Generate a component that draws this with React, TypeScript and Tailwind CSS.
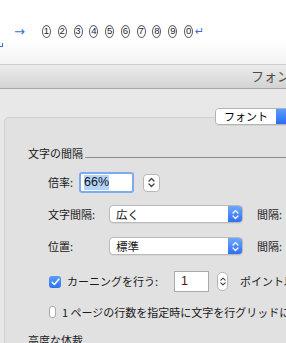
import React from "react";

const JP = { fontFamily: '"Noto Sans CJK JP", "Noto Sans", sans-serif' };

function Chevrons({ color = "#333", w = 7 }: { color?: string; w?: number }) {
  return (
    <svg width={w} height="11" viewBox="0 0 7 11" fill="none">
      <path d="M1 4 L3.5 1.5 L6 4" stroke={color} strokeWidth="1.3" strokeLinecap="round" strokeLinejoin="round" />
      <path d="M1 7 L3.5 9.5 L6 7" stroke={color} strokeWidth="1.3" strokeLinecap="round" strokeLinejoin="round" />
    </svg>
  );
}

function Popup({ text }: { text: string }) {
  return (
    <div className="flex h-[18px] w-[134px] rounded-[4px] border border-[#b9b9b9] bg-white overflow-hidden shadow-[0_1px_0_rgba(0,0,0,0.05)]">
      <div className="flex-1 pl-[6px] text-[11.5px] leading-[16px] text-[#1a1a1a]">{text}</div>
      <div className="flex w-[14px] items-center justify-center bg-gradient-to-b from-[#6ea8fb] to-[#2f6ff2]">
        <Chevrons color="#ffffff" />
      </div>
    </div>
  );
}

const nums = ["1", "2", "3", "4", "5", "6", "7", "8", "9", "0"];

export default function App() {
  return (
    <div className="relative h-[343px] w-[286px] overflow-hidden bg-white" style={JP}>
      {/* document area */}
      <div className="relative h-[64px] bg-gradient-to-b from-white from-60% to-[#f3f3f3]">
        <div className="flex items-center pt-[24px] h-[38px]">
          <span className="ml-[14px] text-[#3a6fd8] text-[13px] leading-none" style={{ fontFamily: '"DejaVu Sans", sans-serif' }}>→</span>
          <div className="ml-[17px] flex">
            {nums.map((n) => (
              <div key={n} className="flex w-[15.8px] justify-start">
                <span
                  className="flex h-[13px] w-[9px] items-center justify-center rounded-[50%] border border-[#5a5a6a] text-[9.5px] leading-none text-[#1a1a2a]"
                  style={{ fontFamily: '"Liberation Sans", sans-serif' }}
                >
                  {n}
                </span>
              </div>
            ))}
          </div>
          <span className="-ml-[5px] text-[11px] leading-none text-[#3a6fd8]" style={{ fontFamily: '"DejaVu Sans", sans-serif' }}>↵</span>
        </div>
        <div className="absolute left-0 top-[43px] h-[4px] w-[3px] border-b border-r border-[#3a6fd8]" />
      </div>

      {/* window title bar */}
      <div className="h-[25px] border-t border-b border-t-[#cdcdcd] border-b-[#a9a9a9] bg-gradient-to-b from-[#ececec] to-[#d3d3d3]">
        <div className="whitespace-nowrap pl-[251px] text-[13px] leading-[22px] text-[#4d4d4d]">フォント</div>
      </div>

      {/* body */}
      <div className="relative h-[254px] bg-[#e8e8e8] pt-[28px] pl-[4px]">
        {/* segmented control */}
        <div className="absolute left-[215px] top-[19px] z-10 flex h-[17px] w-[100px] overflow-hidden rounded-[4px] border border-[#b4b4b4] shadow-[0_1px_0_rgba(0,0,0,0.06)]">
          <div className="w-[60px] bg-white text-center text-[11px] leading-[15px] text-black">フォント</div>
          <div className="flex-1 bg-gradient-to-b from-[#5e9cfa] to-[#2a6cf1]" />
        </div>

        {/* group box */}
        <div className="h-[260px] w-[320px] rounded-[5px] border border-[#d0d0d0] bg-[#e1e1e1] pl-[23px]">
          <div className="mt-[28px] flex items-center h-[14px]">
            <span className="text-[11px] leading-[14px] text-[#1a1a1a]">文字の間隔</span>
            <div className="ml-[2px] mt-[9px] h-px flex-1 bg-[#8c8c8c]" />
          </div>

          {/* 倍率 */}
          <div className="mt-[12px] flex h-[21px] items-center pl-[20px]">
            <span className="w-[31px] text-[11px] text-[#1a1a1a]">倍率:</span>
            <div className="flex h-[21px] w-[55px] items-center rounded-[3px] border-[2px] border-[#7eaaf0] bg-white pl-[3px]">
              <span className="bg-[#b3d3fd] text-[12.5px] leading-[15px] text-[#111]" style={{ fontFamily: '"Liberation Sans", sans-serif' }}>66%</span>
            </div>
            <div className="ml-[9px] flex h-[18px] w-[17px] items-center justify-center rounded-[4px] border border-[#b7b7b7] bg-white">
              <Chevrons color="#444" />
            </div>
          </div>

          {/* 文字間隔 */}
          <div className="mt-[12px] flex h-[18px] items-center pl-[20px]">
            <span className="w-[61px] text-[11px] text-[#1a1a1a]">文字間隔:</span>
            <Popup text="広く" />
            <span className="ml-[14px] text-[11px] text-[#1a1a1a]">間隔:</span>
          </div>

          {/* 位置 */}
          <div className="mt-[14px] flex h-[18px] items-center pl-[20px]">
            <span className="w-[61px] text-[11px] text-[#1a1a1a]">位置:</span>
            <Popup text="標準" />
            <span className="ml-[14px] text-[11px] text-[#1a1a1a]">間隔:</span>
          </div>

          {/* カーニング */}
          <div className="mt-[16px] flex h-[21px] items-center pl-[21px]">
            <div className="flex h-[12px] w-[12px] items-center justify-center rounded-[3px] bg-gradient-to-b from-[#5a9cfb] to-[#2f72f1]">
              <svg width="9" height="8" viewBox="0 0 9 8" fill="none">
                <path d="M1.2 4.3 L3.4 6.5 L7.8 1.2" stroke="white" strokeWidth="1.6" strokeLinecap="round" strokeLinejoin="round" />
              </svg>
            </div>
            <span className="ml-[6px] w-[107px] text-[11px] text-[#1a1a1a]">カーニングを行う:</span>
            <div className="flex h-[21px] w-[35px] items-center border border-[#a9a9a9] bg-white pl-[6px]">
              <span className="text-[12.5px] leading-none text-[#5a1010]" style={{ fontFamily: '"Liberation Sans", sans-serif' }}>1</span>
            </div>
            <div className="ml-[8px] flex h-[19px] w-[11px] items-center justify-center rounded-[5px] border border-[#b7b7b7] bg-white">
              <Chevrons color="#444" w={6} />
            </div>
            <span className="ml-[12px] whitespace-nowrap text-[11px] text-[#1a1a1a]">ポイント以上</span>
          </div>

          {/* 1ページ */}
          <div className="mt-[13px] flex h-[14px] items-center pl-[21px]">
            <div className="h-[12px] w-[12px] rounded-[3px] border border-[#a8a8a8] bg-white" />
            <span className="ml-[6px] whitespace-nowrap text-[11px] text-[#1a1a1a]">1 ページの行数を指定時に文字を行グリッドに揃える</span>
          </div>

          <div className="mt-[14px] text-[11px] leading-[14px] text-[#1a1a1a]">高度な体裁</div>
        </div>
      </div>
    </div>
  );
}
